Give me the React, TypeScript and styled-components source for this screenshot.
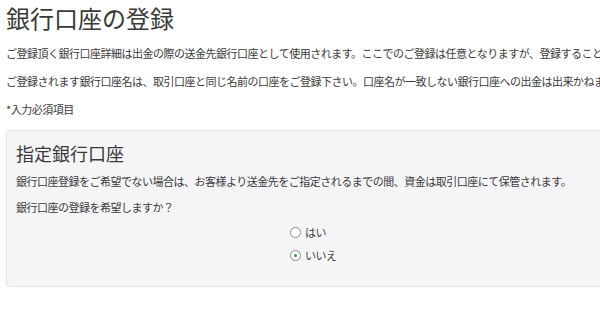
import React, { useState } from "react";
import styled, { createGlobalStyle } from "styled-components";

const GlobalStyle = createGlobalStyle`
  html, body {
    margin: 0;
    padding: 0;
    background: #ffffff;
    overflow: hidden;
  }
  body {
    font-family: "Noto Sans CJK JP", "Noto Sans", sans-serif;
    color: #333333;
  }
`;

const Page = styled.div`
  padding: 3px 0 0 6px;
  width: 640px;
`;

const Title = styled.h1`
  margin: 0 0 10px;
  font-size: 24px;
  font-weight: 400;
  line-height: 30px;
  color: #3a3a3a;
`;

const Line = styled.p<{ $gap?: number }>`
  margin: 0 0 ${(p) => p.$gap ?? 8}px;
  font-size: 11px;
  line-height: 20px;
  letter-spacing: -0.5px;
  white-space: nowrap;
  color: #3a3a3a;
`;

const Panel = styled.section`
  margin-top: 11px;
  padding: 10px 10px 21px 9px;
  background: #f5f5f7;
  border: 1px solid #e3e3e3;
  border-radius: 4px;
  box-shadow: 0 1px 1px rgba(0, 0, 0, 0.05);
`;

const PanelTitle = styled.h2`
  margin: 0 0 6px;
  font-size: 18px;
  font-weight: 400;
  line-height: 24px;
  color: #3a3a3a;
`;

const RadioGroup = styled.div`
  margin-top: 5px;
  padding-left: 274px;
  display: flex;
  flex-direction: column;
  gap: 3px;
`;

const RadioRow = styled.label`
  display: flex;
  align-items: center;
  gap: 4px;
  height: 20px;
  font-size: 11px;
  letter-spacing: -0.5px;
  color: #444444;
  cursor: pointer;
`;

const RadioMark = styled.span<{ $checked: boolean }>`
  position: relative;
  width: 11px;
  height: 11px;
  border-radius: 50%;
  border: 1px solid #8a8a8a;
  background: #ffffff;
  box-sizing: border-box;
  &::after {
    content: "";
    display: ${(p) => (p.$checked ? "block" : "none")};
    position: absolute;
    left: 3px;
    top: 3px;
    width: 3px;
    height: 3px;
    border-radius: 50%;
    background: #3c9a3c;
  }
`;

const HiddenInput = styled.input`
  display: none;
`;

const options = ["はい", "いいえ"];

export default function App() {
  const [choice, setChoice] = useState("いいえ");
  return (
    <Page>
      <GlobalStyle />
      <Title>銀行口座の登録</Title>
      <Line>
        ご登録頂く銀行口座詳細は出金の際の送金先銀行口座として使用されます。ここでのご登録は任意となりますが、登録することをお勧めします。
      </Line>
      <Line>
        ご登録されます銀行口座名は、取引口座と同じ名前の口座をご登録下さい。口座名が一致しない銀行口座への出金は出来かねます。
      </Line>
      <Line $gap={0}>*入力必須項目</Line>
      <Panel>
        <PanelTitle>指定銀行口座</PanelTitle>
        <Line $gap={6}>
          銀行口座登録をご希望でない場合は、お客様より送金先をご指定されるまでの間、資金は取引口座にて保管されます。
        </Line>
        <Line $gap={0}>銀行口座の登録を希望しますか？</Line>
        <RadioGroup>
          {options.map((o) => (
            <RadioRow key={o}>
              <HiddenInput
                type="radio"
                name="bank"
                checked={choice === o}
                onChange={() => setChoice(o)}
              />
              <RadioMark $checked={choice === o} />
              {o}
            </RadioRow>
          ))}
        </RadioGroup>
      </Panel>
    </Page>
  );
}
